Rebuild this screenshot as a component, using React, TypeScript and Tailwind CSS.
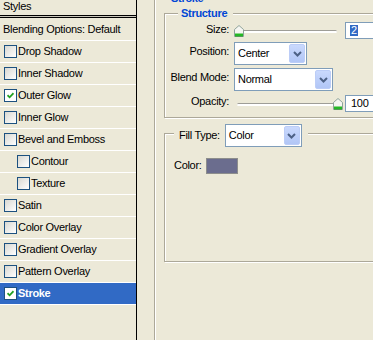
import React from "react";

const rows = [
  { label: "Drop Shadow" },
  { label: "Inner Shadow" },
  { label: "Outer Glow", checked: true },
  { label: "Inner Glow" },
  { label: "Bevel and Emboss" },
  { label: "Contour", indent: true },
  { label: "Texture", indent: true },
  { label: "Satin" },
  { label: "Color Overlay" },
  { label: "Gradient Overlay" },
  { label: "Pattern Overlay" },
  { label: "Stroke", checked: true, selected: true },
];

function Checkbox({ checked }: { checked?: boolean }) {
  return (
    <span
      className={`w-[13px] h-[13px] shrink-0 border border-[#1c5180] flex items-center justify-center ${
        checked ? "bg-white" : "bg-linear-to-br from-[#d8d8d2] to-white"
      }`}
    >
      {checked && (
        <svg width="7" height="7" viewBox="0 0 7 7">
          <path d="M0.5 3.2 L2.6 5.3 L6.5 1.2" fill="none" stroke="#21a121" strokeWidth="1.8" />
        </svg>
      )}
    </span>
  );
}

function Dropdown({ value, w }: { value: string; w: string }) {
  return (
    <div className={`${w} h-[23px] shrink-0 border border-[#7f9db9] bg-white flex items-center justify-between pl-[3px] pr-[1px]`}>
      <span>{value}</span>
      <span className="w-[16px] h-[19px] rounded-[2px] border border-[#bccdf7] bg-linear-to-b from-[#cad9fd] to-[#b1c6f6] flex items-center justify-center">
        <svg width="9" height="6" viewBox="0 0 9 6">
          <path d="M1 1 L4.5 4.5 L8 1" fill="none" stroke="#4d6185" strokeWidth="2" />
        </svg>
      </span>
    </div>
  );
}

function Thumb({ at }: { at: string }) {
  return (
    <svg className={`absolute top-0 ${at}`} width="10" height="12" viewBox="0 0 10 12">
      <path d="M0.5 4.5 L5 0.5 L9.5 4.5 V11.5 H0.5 Z" fill="#f6f6f2" stroke="#8fa39a" />
      <rect x="1" y="8.5" width="8" height="2.5" fill="#25b825" />
      <rect x="1" y="11" width="8" height="0.5" fill="#1a8f1a" />
    </svg>
  );
}

function Slider({ end }: { end?: boolean }) {
  return (
    <div className="relative w-[104px] h-[12px] shrink-0">
      <div className="absolute left-[3px] right-[1px] top-[5px] h-[3px] rounded-full border-t border-[#9e9d97] bg-white" />
      <Thumb at={end ? "left-[99px]" : "left-0"} />
    </div>
  );
}

const legend = "bg-[#ece9d8] leading-[14px] font-bold text-[#0046d5]";
const etched = "border border-[#aca899] shadow-[1px_1px_0_#fff,inset_1px_1px_0_#fff]";

export default function App() {
  return (
    <div className="w-[373px] h-[340px] overflow-hidden flex bg-[#ece9d8] text-black text-[11px] tracking-[-0.3px] font-['Liberation_Sans',Arial,sans-serif]">
      {/* styles list */}
      <div className="w-[137px] shrink-0 border-r border-black flex flex-col">
        <div className="h-[15px] pl-[3px] leading-[12px]">Styles</div>
        <div className="h-[3px] border-y border-black bg-[#c9c6b9]" />
        <div className="h-[23px] border-b border-white pl-[3px] flex items-center">
          Blending Options: Default
        </div>
        {rows.map((r) => (
          <div
            key={r.label}
            className={`h-[22px] border-b border-white flex items-center gap-[1px] ${r.indent ? "pl-[17px]" : "pl-[4px]"} ${
              r.selected ? "bg-[#316ac5] text-white font-bold" : ""
            }`}
          >
            <Checkbox checked={r.checked} />
            <span>{r.label}</span>
          </div>
        ))}
      </div>

      {/* stroke settings */}
      <div className="flex-1 min-w-0 pl-[17px]">
        <fieldset className={`-mt-[9px] w-[260px] h-[370px] ${etched}`}>
          <legend className={`ml-[14px] px-[2px] ${legend}`}>Stroke</legend>
          <div className="pl-[9px] pt-[1px] flex flex-col gap-[6px]">
            <fieldset className={`w-[240px] ${etched}`}>
              <legend className={`ml-[13px] pl-[3px] pr-[6px] ${legend}`}>Structure</legend>
              <div className="flex flex-col pt-[2px] pb-[5px]">
                <div className="h-[17px] flex items-center gap-[5px]">
                  <span className="w-[64px] text-right mb-[3px]">Size:</span>
                  <Slider />
                  <div className="ml-[2px] w-[40px] h-[17px] border border-[#7f9db9] bg-white flex items-center pl-[4px]">
                    <span className="bg-[#316ac5] text-white px-[1px] leading-[11px]">2</span>
                  </div>
                </div>
                <div className="mt-[3px] h-[23px] flex items-center gap-[5px]">
                  <span className="w-[64px] text-right mb-[4px]">Position:</span>
                  <Dropdown value="Center" w="w-[73px]" />
                </div>
                <div className="mt-[3px] h-[23px] flex items-center gap-[5px]">
                  <span className="w-[64px] text-right mb-[4px]">Blend Mode:</span>
                  <Dropdown value="Normal" w="w-[99px]" />
                </div>
                <div className="mt-[4px] h-[17px] flex items-center gap-[5px]">
                  <span className="w-[64px] text-right mb-[4px]">Opacity:</span>
                  <Slider end />
                  <div className="ml-[2px] w-[40px] h-[17px] border border-[#7f9db9] bg-white flex items-center pl-[5px]">
                    100
                  </div>
                </div>
              </div>
            </fieldset>

            <fieldset className={`w-[240px] h-[138px] ${etched}`}>
              <legend className="ml-[9px] pl-[5px] pr-[6px] h-[18px] bg-[#ece9d8]">
                <div className="flex items-start gap-[5px]">
                  <span className="pt-[3px]">Fill Type:</span>
                  <Dropdown value="Color" w="w-[77px]" />
                </div>
              </legend>
              <div className="mt-[15px] pl-[9px] flex items-center gap-[5px]">
                <span className="w-[27px] mb-[2px]">Color:</span>
                <span className="w-[32px] h-[16px] border border-[#8d8e8c] bg-[#6b6d8e]" />
              </div>
            </fieldset>
          </div>
        </fieldset>
      </div>
    </div>
  );
}
